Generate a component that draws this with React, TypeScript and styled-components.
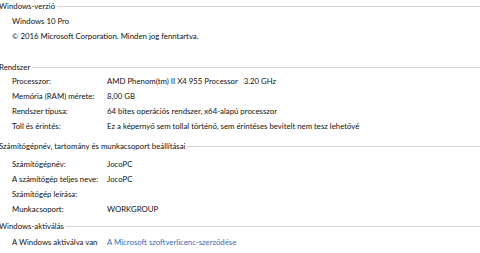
import React from "react";
import styled, { createGlobalStyle } from "styled-components";

const Global = createGlobalStyle`
  html, body { margin: 0; padding: 0; background: #ffffff; }
  body { font-family: Lato, "Open Sans", sans-serif; }
`;

const Page = styled.div`
  width: 480px;
  height: 253px;
  overflow: hidden;
  background: #ffffff;
  color: #111111;
  font-size: 7.8px;
`;

const Section = styled.section<{ $top: number; $gap: number }>`
  margin-top: ${(p) => p.$top}px;
  display: flex;
  flex-direction: column;
  & > div:nth-child(2) { margin-top: ${(p) => p.$gap}px; }
`;

const Header = styled.div`
  display: flex;
  align-items: center;
  height: 12px;
  margin-left: -1px;
  white-space: nowrap;
  line-height: 12px;
  &::after {
    content: "";
    flex: 1;
    height: 1px;
    background: #d6d6d6;
    margin-left: 2px;
  }
`;

const Rows = styled.div`
  display: grid;
  grid-template-columns: 95px 1fr;
  grid-auto-rows: 15px;
  padding-left: 12px;
  align-items: center;
  white-space: pre;
`;

const Plain = styled.div`
  padding-left: 12px;
  height: 15px;
  line-height: 15px;
  white-space: nowrap;
`;

const Link = styled.span`
  color: #2f6eb5;
`;

const sysRows: [string, string][] = [
  ["Processzor:", "AMD Phenom(tm) II X4 955 Processor   3.20 GHz"],
  ["Memória (RAM) mérete:", "8,00 GB"],
  ["Rendszer típusa:", "64 bites operációs rendszer, x64-alapú processzor"],
  ["Toll és érintés:", "Ez a képernyő sem tollal történő, sem érintéses bevitelt nem tesz lehetővé"],
];

const pcRows: [string, string][] = [
  ["Számítógépnév:", "JocoPC"],
  ["A számítógép teljes neve:", "JocoPC"],
  ["Számítógép leírása:", ""],
  ["Munkacsoport:", "WORKGROUP"],
];

export default function App() {
  return (
    <Page>
      <Global />
      <Section $top={0} $gap={2}>
        <Header>Windows-verzió</Header>
        <Plain>Windows 10 Pro</Plain>
        <Plain>© 2016 Microsoft Corporation. Minden jog fenntartva.</Plain>
      </Section>
      <Section $top={17} $gap={0}>
        <Header>Rendszer</Header>
        <Rows>
          {sysRows.map(([l, v]) => (
            <React.Fragment key={l}>
              <span>{l}</span>
              <span>{v}</span>
            </React.Fragment>
          ))}
        </Rows>
      </Section>
      <Section $top={7} $gap={4}>
        <Header>Számítógépnév, tartomány és munkacsoport beállításai</Header>
        <Rows>
          {pcRows.map(([l, v]) => (
            <React.Fragment key={l}>
              <span>{l}</span>
              <span>{v}</span>
            </React.Fragment>
          ))}
        </Rows>
      </Section>
      <Section $top={4} $gap={2}>
        <Header>Windows-aktiválás</Header>
        <Rows>
          <span>A Windows aktiválva van</span>
          <Link>A Microsoft szoftverlicenc-szerződése</Link>
        </Rows>
      </Section>
    </Page>
  );
}
